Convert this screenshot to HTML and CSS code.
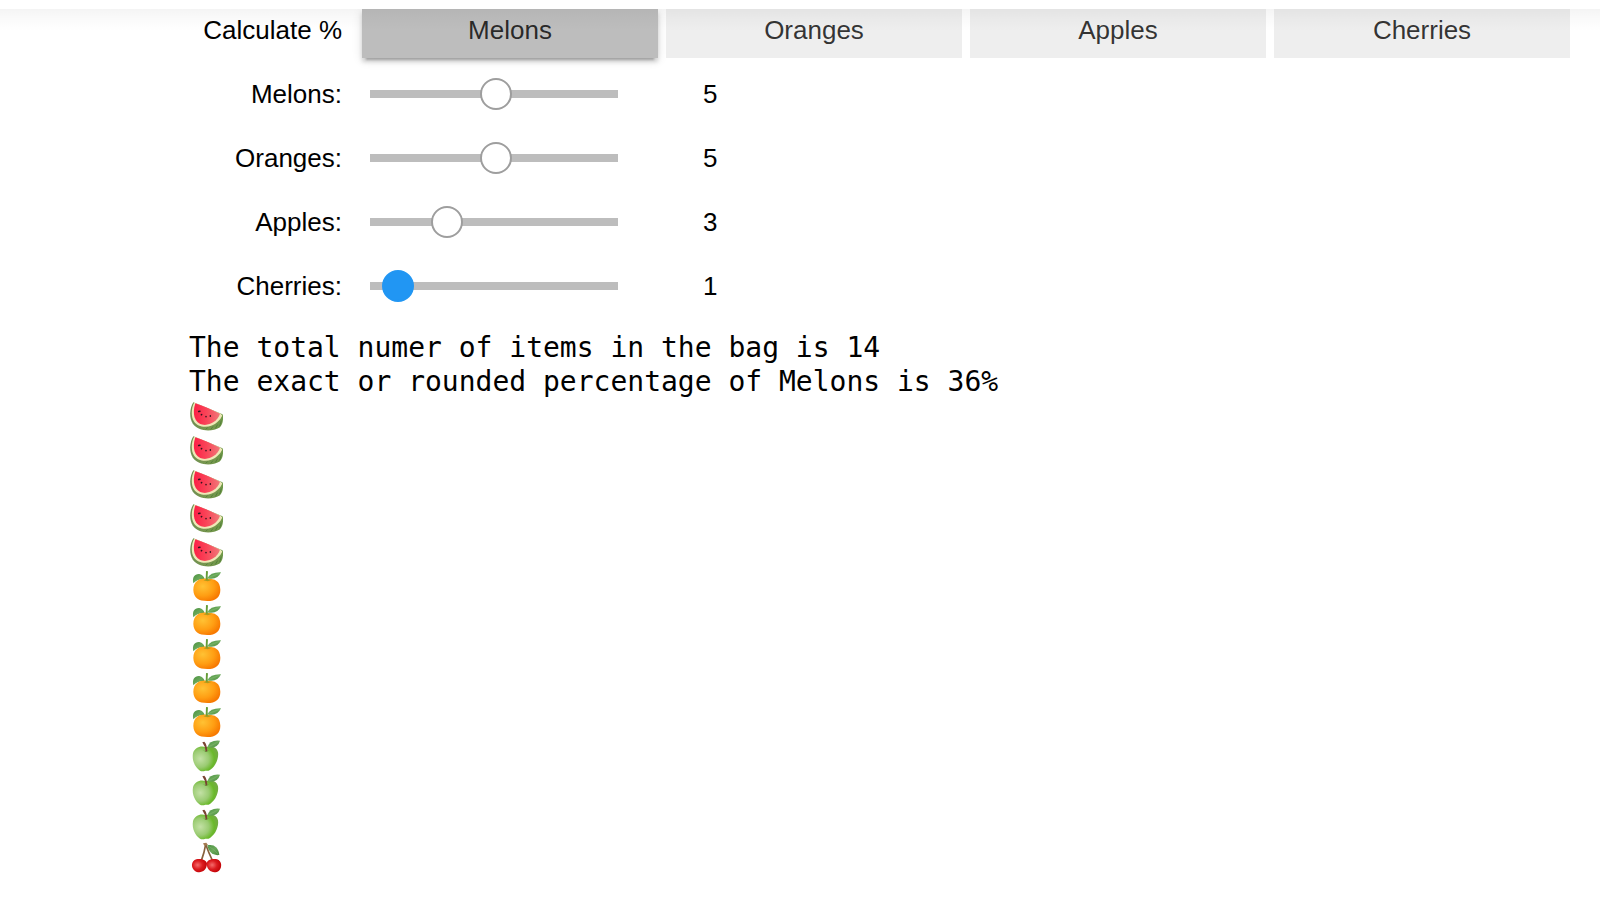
FILE: index.html
```html
<!DOCTYPE html>
<html lang="en">
<head>
<meta charset="utf-8">
<title>Bag of fruit</title>
<link rel="stylesheet" href="styles.css">
</head>
<body>
<svg class="defs" width="0" height="0" aria-hidden="true">
  <defs>
    <linearGradient id="flesh" x1="0" x2="1"><stop offset="0" stop-color="#fc1f46"/><stop offset=".5" stop-color="#f94659"/><stop offset="1" stop-color="#f0797a"/></linearGradient>
    <linearGradient id="rind" x1="0" x2="1"><stop offset="0" stop-color="#6f8f52"/><stop offset=".5" stop-color="#78974f"/><stop offset="1" stop-color="#6e9848"/></linearGradient>
    <radialGradient id="peel" cx=".35" cy=".35" r=".7"><stop offset="0" stop-color="#ffc234"/><stop offset=".6" stop-color="#ff9e13"/><stop offset="1" stop-color="#f77800"/></radialGradient>
    <linearGradient id="leaf" x1="0" y1="0" x2="1" y2="1"><stop offset="0" stop-color="#4b9141"/><stop offset=".5" stop-color="#6aa95a"/><stop offset="1" stop-color="#46883a"/></linearGradient>
    <radialGradient id="skin" cx=".3" cy=".5" r=".68"><stop offset="0" stop-color="#c3e1a5"/><stop offset=".5" stop-color="#9acb72"/><stop offset=".8" stop-color="#6ab92a"/><stop offset="1" stop-color="#72ad40"/></radialGradient>
    <radialGradient id="berry" cx=".38" cy=".45" r=".65"><stop offset="0" stop-color="#f56c6c"/><stop offset=".5" stop-color="#dc1c20"/><stop offset="1" stop-color="#c00004"/></radialGradient>
    <symbol id="melon" viewBox="27 10.5 102 102">
      <path d="M40 20C29 36 27 67 38 84C54 108 95 110 119 96Q131 85 129 58L122 54Z" fill="url(#rind)"/>
      <path d="M43 21C33 39 33 64 42 78C56 100 94 98 113 79Q123 70 127 60L121 54Z" fill="#eee8b7"/>
      <path d="M46 23Q78 33 120 55C113 77 91 90 70 88C42 84 36 52 46 23Z" fill="url(#flesh)"/>
      <path d="M77 102L83 96M92 102L99 93M106 99L113 87M119 92L124 75" stroke="#55803b" stroke-width="3" fill="none"/>
      <path d="M56 48l4-1M64 58l1-1M78 64v-1M91 62v-1" stroke="#30151e" stroke-width="4.5" stroke-linecap="round"/>
    </symbol>
    <symbol id="orange" viewBox="27 11 102 102">
      <path d="M40 54C36 36 44 25 58 26Q72 30 74 42Q54 39 40 54Z" fill="url(#leaf)"/>
      <path d="M81 40C63 38 40 44 40 74C41 98 56 107 82 107C107 107 121 96 121 73C120 46 105 40 81 40Z" fill="url(#peel)"/>
      <path d="M78 17L84 18Q82 31 84 46L77 43Z" fill="#659c38"/>
      <path d="M82 39Q91 20 123 21Q112 46 82 39Z" fill="url(#leaf)"/>
      <path d="M82 38Q98 31 119 24" stroke="#8bbd7a" stroke-width="1.2" fill="none"/>
      <path d="M70 45L82 42L94 44L83 48Z" fill="#aa9b1c"/>
    </symbol>
    <symbol id="apple" viewBox="27 12 102 102">
      <path d="M77 37C64 30 43 38 39 55C35 77 46 98 60 107Q67 110 76 107Q84 109 91 104C107 94 117 69 114 52C109 33 91 32 77 37Z" fill="url(#skin)"/>
      <path d="M68 46Q78 50 88 46Q83 51 77 50Q72 49 68 46Z" fill="#55852e" opacity=".8"/>
      <path d="M67 22L73 20Q81 28 82 48L77 50Q76 34 67 22Z" fill="#784432"/>
      <path d="M82 37Q88 14 120 17Q112 43 82 37Z" fill="url(#leaf)"/>
      <path d="M85 35Q102 29 115 20" stroke="#87b96d" stroke-width="1.2" fill="none"/>
    </symbol>
    <symbol id="cherry" viewBox="27 17 102 102">
      <path d="M77 27Q73 52 64 76M77 27Q86 53 98 77" stroke="#86603c" stroke-width="5" fill="none"/>
      <path d="M69 24L79 22L84 29L73 31Z" fill="#a47a51"/>
      <path d="M82 30C99 25 116 34 118 59C98 62 85 49 82 30Z" fill="url(#leaf)"/>
      <path d="M84 32Q101 40 115 57" stroke="#8eba7d" stroke-width="1.2" fill="none"/>
      <path d="M81 84C77 71 59 70 49 72C33 76 32 97 44 106C57 116 81 110 81 84Z" fill="url(#berry)"/>
      <path d="M80 84C82 71 101 70 111 72C126 76 127 97 117 106C104 116 80 110 80 84Z" fill="url(#berry)"/>
    </symbol>
  </defs>
</svg>
<header class="topbar"></header>
<main class="output">
  <div class="row first"><div class="label">Calculate %</div><div class="toggles"><button class="toggle active">Melons</button><button class="toggle">Oranges</button><button class="toggle">Apples</button><button class="toggle">Cherries</button></div></div>
  <div class="row"><div class="label">Melons:</div><div class="slider"><span class="handle five"></span></div><div class="readout">5</div></div>
  <div class="row"><div class="label">Oranges:</div><div class="slider"><span class="handle five"></span></div><div class="readout">5</div></div>
  <div class="row"><div class="label">Apples:</div><div class="slider"><span class="handle three"></span></div><div class="readout">3</div></div>
  <div class="row"><div class="label">Cherries:</div><div class="slider"><span class="handle one"></span></div><div class="readout">1</div></div>
  <pre class="text">The total numer of items in the bag is 14
The exact or rounded percentage of Melons is 36%</pre>
  <div class="bag">
    <svg class="fruit"><use href="#melon"/></svg>
    <svg class="fruit"><use href="#melon"/></svg>
    <svg class="fruit"><use href="#melon"/></svg>
    <svg class="fruit"><use href="#melon"/></svg>
    <svg class="fruit"><use href="#melon"/></svg>
    <svg class="fruit"><use href="#orange"/></svg>
    <svg class="fruit"><use href="#orange"/></svg>
    <svg class="fruit"><use href="#orange"/></svg>
    <svg class="fruit"><use href="#orange"/></svg>
    <svg class="fruit"><use href="#orange"/></svg>
    <svg class="fruit"><use href="#apple"/></svg>
    <svg class="fruit"><use href="#apple"/></svg>
    <svg class="fruit"><use href="#apple"/></svg>
    <svg class="fruit"><use href="#cherry"/></svg>
  </div>
</main>
</body>
</html>
```
FILE: styles.css
```css
* { box-sizing: border-box; }
body { margin: 0; height: 900px; overflow: hidden; background: #fff; color: #000; font-family: "Liberation Sans", Arial, sans-serif; font-size: 26px; }
.defs { position: absolute; }
.topbar { position: relative; z-index: 2; height: 9px; background: #fff; }
.topbar::after { content: ""; position: absolute; top: 9px; left: 0; width: 100%; height: 22px; background: linear-gradient(rgba(0,0,0,.042), rgba(0,0,0,.018) 45%, transparent); }
.output { padding-left: 189px; }
.row { display: flex; height: 56px; margin-bottom: 8px; line-height: 56px; }
.first { height: 49px; line-height: 42px; }
.label { width: 153px; text-align: right; margin-right: 20px; white-space: nowrap; }
.toggles { display: flex; gap: 8px; }
.toggle { width: 296px; height: 49px; padding: 0 0 7px; border: 0; background: #eee; color: rgba(0,0,0,.8); font: inherit; line-height: 42px; }
.active { background: #bdbdbd; box-shadow: 0 4px 4px rgba(0,0,0,.14), 0 2px 10px rgba(0,0,0,.12), 0 6px 2px -4px rgba(0,0,0,.2); }
.slider { position: relative; width: 248px; height: 8px; margin: 24px 0 0 8px; background: #bdbdbd; }
.handle { position: absolute; top: -12px; width: 32px; height: 32px; border: 2px solid #9e9e9e; border-radius: 50%; background: #fff; }
.five { left: 110px; }
.three { left: 61px; }
.one { left: 12px; background: #2196f3; border-color: #2196f3; }
.readout { margin-left: 85px; }
.text { margin: 17px 0 0; font: 28px/34px "DejaVu Sans Mono", monospace; }
.bag { display: flex; flex-direction: column; }
.fruit { width: 34px; height: 34px; }
```
